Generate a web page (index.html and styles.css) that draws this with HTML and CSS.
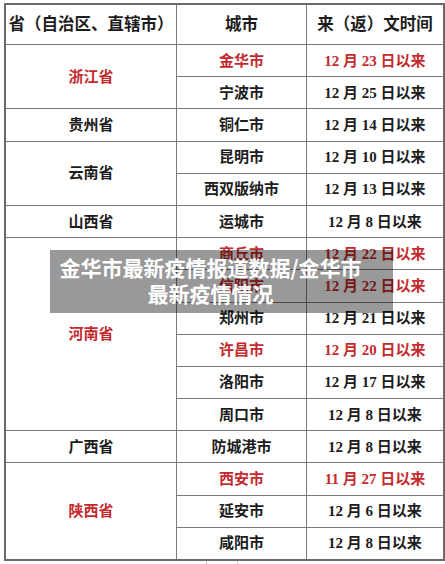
FILE: index.html
```html
<!DOCTYPE html>
<html lang="zh">
<head>
<meta charset="utf-8">
<link rel="stylesheet" href="styles.css">
</head>
<body>
<div class="page">
  <table class="epi">
    <thead>
      <tr class="head">
        <th class="c1">省（自治区、直辖市）</th>
        <th class="c2">城市</th>
        <th class="c3">来（返）文时间</th>
      </tr>
    </thead>
    <tbody>
      <tr><td rowspan="2" class="red">浙江省</td><td class="red">金华市</td><td class="red">12 月 23 日以来</td></tr>
      <tr><td>宁波市</td><td>12 月 25 日以来</td></tr>
      <tr><td>贵州省</td><td>铜仁市</td><td>12 月 14 日以来</td></tr>
      <tr><td rowspan="2">云南省</td><td>昆明市</td><td>12 月 10 日以来</td></tr>
      <tr><td>西双版纳市</td><td>12 月 13 日以来</td></tr>
      <tr><td>山西省</td><td>运城市</td><td>12 月 8 日以来</td></tr>
      <tr><td rowspan="6" class="red">河南省</td><td class="red">商丘市</td><td class="red">12 月 22 日以来</td></tr>
      <tr><td class="red">信阳市</td><td class="red">12 月 22 日以来</td></tr>
      <tr><td>郑州市</td><td>12 月 21 日以来</td></tr>
      <tr><td class="red">许昌市</td><td class="red">12 月 20 日以来</td></tr>
      <tr><td>洛阳市</td><td>12 月 17 日以来</td></tr>
      <tr><td>周口市</td><td>12 月 8 日以来</td></tr>
      <tr><td>广西省</td><td>防城港市</td><td>12 月 8 日以来</td></tr>
      <tr><td rowspan="3" class="red">陕西省</td><td class="red">西安市</td><td class="red">11 月 27 日以来</td></tr>
      <tr><td>延安市</td><td>12 月 6 日以来</td></tr>
      <tr><td>咸阳市</td><td>12 月 8 日以来</td></tr>
    </tbody>
  </table>
  <div class="under"><span class="tick"></span><span class="tick"></span></div>
  <div class="banner">金华市最新疫情报道数据/金华市<br>最新疫情情况</div>
</div>
</body>
</html>
```
FILE: styles.css
```css
html, body {
  margin: 0;
  padding: 0;
  background: #fff;
}
.page {
  position: relative;
  width: 445px;
  height: 564px;
  overflow: hidden;
  padding: 3px 0 0 4px;
  box-sizing: border-box;
}
.epi {
  border-collapse: collapse;
  width: 435px;
  table-layout: fixed;
  border: 2px solid #6a6a6a;
  font-family: "Liberation Serif", "Noto Sans CJK SC", serif;
  font-weight: 700;
  color: #1c1c1c;
}
.epi th, .epi td {
  border: 1px solid #7a7a7a;
  text-align: center;
  vertical-align: middle;
  padding: 0;
  font-size: 15px;
  height: 31.2px;
  line-height: 20px;
}
.epi th {
  font-size: 16.5px;
  font-weight: 700;
  height: 39px;
}
.c1 { width: 170px; }
.c2 { width: 129px; }
.c3 { width: 136px; }
.epi .red {
  color: #c42a2e;
}
.under {
  display: flex;
  height: 6px;
  padding-left: 202px;
  gap: 30px;
}
.tick {
  width: 1px;
  height: 6px;
  background: #c8c8c8;
}
.banner {
  position: absolute;
  left: 50px;
  top: 250px;
  width: 343px;
  height: 63px;
  box-sizing: border-box;
  padding: 4px 30px 0 8px;
  background: rgba(0, 0, 0, 0.4);
  color: #fff;
  font-family: "Noto Sans CJK SC", sans-serif;
  font-weight: 700;
  font-size: 21px;
  line-height: 26px;
  text-align: center;
  white-space: nowrap;
}
```
